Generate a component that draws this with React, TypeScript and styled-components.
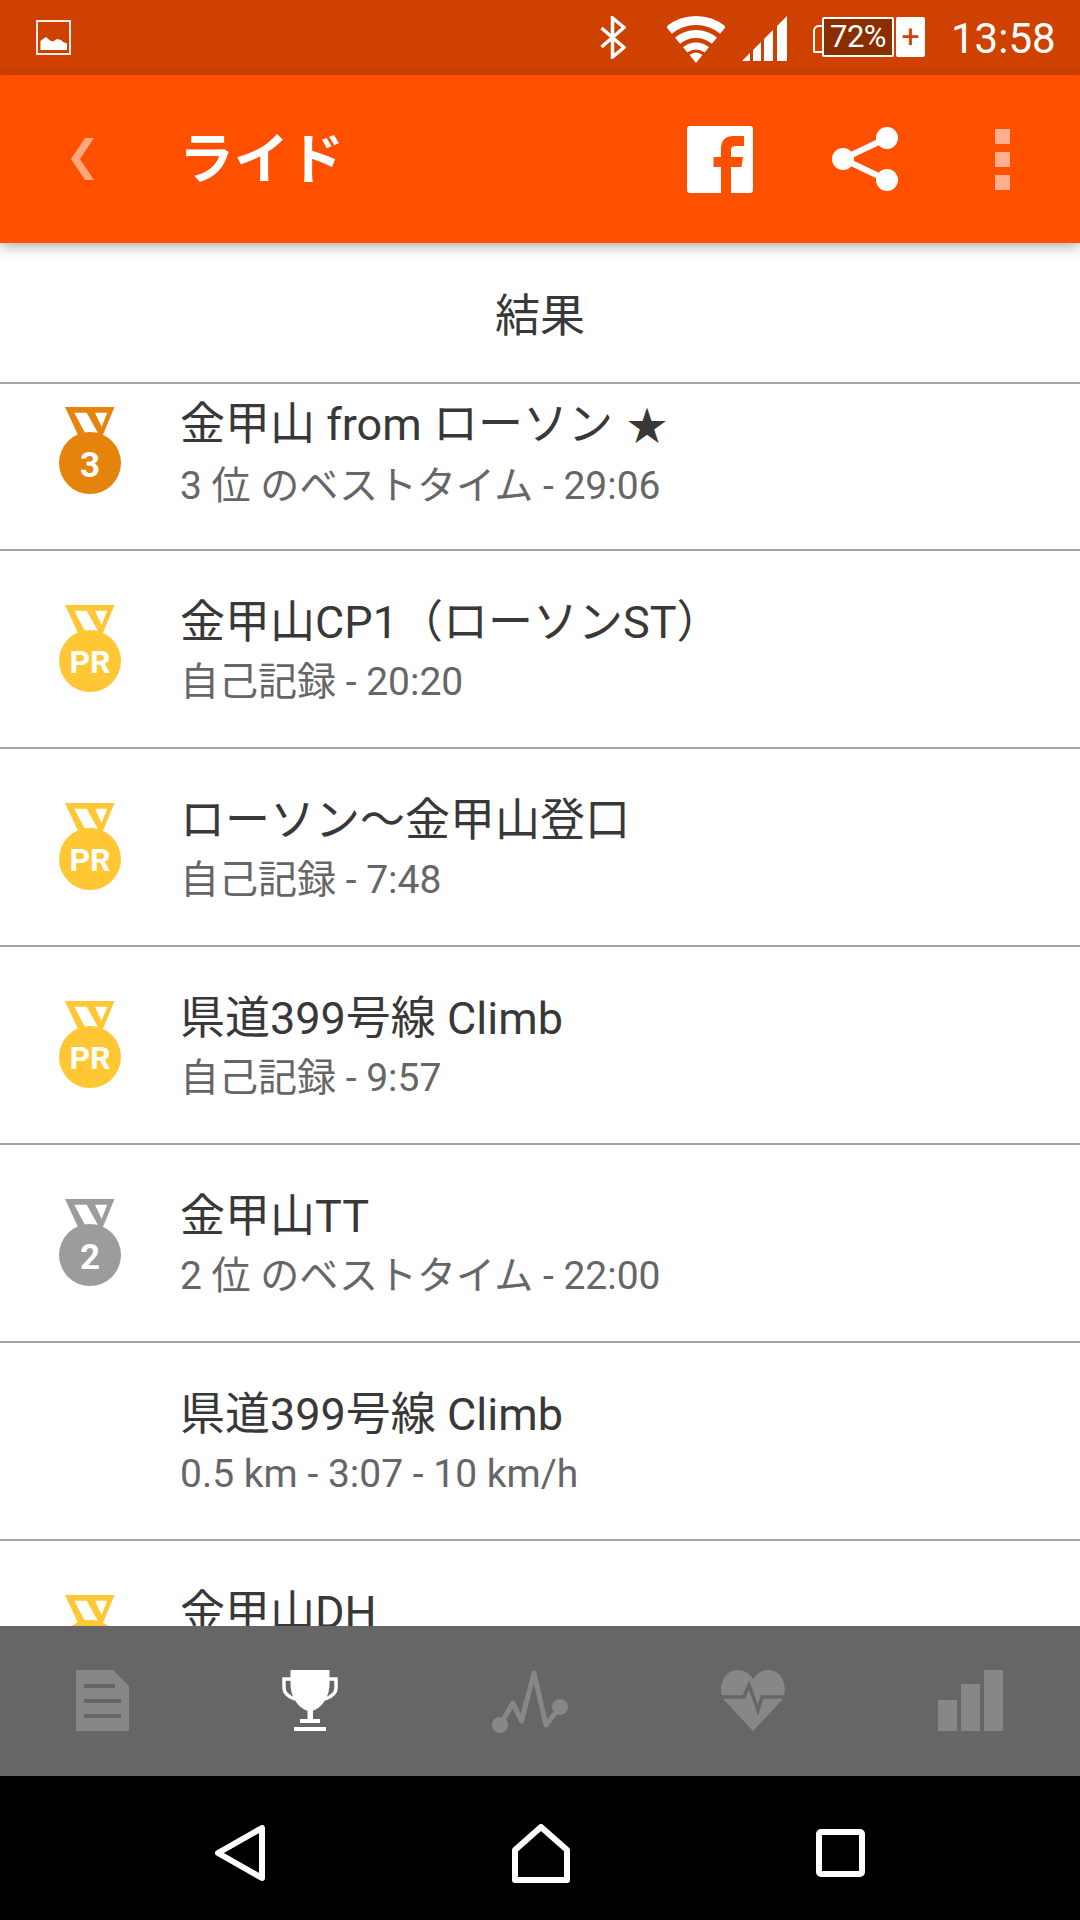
import styled, { createGlobalStyle } from "styled-components";

const GlobalStyle = createGlobalStyle`
  html, body {
    margin: 0;
    padding: 0;
    background: #fff;
  }
  * {
    box-sizing: border-box;
  }
`;

const FONT = `Roboto, "Noto Sans CJK JP", sans-serif`;

const Page = styled.div`
  width: 1080px;
  height: 1920px;
  display: flex;
  flex-direction: column;
  overflow: hidden;
  font-family: ${FONT};
`;

const StatusBar = styled.div`
  height: 75px;
  flex: none;
  background: #ce4100;
  display: flex;
  align-items: flex-start;
  justify-content: space-between;
  padding: 16px 25px 0 36px;
`;

const StatusRight = styled.div`
  display: flex;
  align-items: flex-start;
`;

const GalleryIcon = styled.svg`
  margin-top: 4px;
`;

const WifiIcon = styled.svg`
  margin-left: 41px;
`;

const SignalIcon = styled.svg`
  margin-left: 17px;
`;

const Battery = styled.div`
  position: relative;
  margin: 1px 0 0 35px;
  width: 72px;
  height: 40px;
  background: #8a2e00;
  border: 2px solid #fff;
  border-radius: 2px;
  color: #fff;
  font-size: 31px;
  line-height: 36px;
  text-align: center;
  letter-spacing: -0.5px;

  /* battery nub, its corner cut towards the body */
  &::before {
    content: "";
    position: absolute;
    left: -11px;
    top: 6px;
    width: 9px;
    height: 24px;
    border: 2px solid #fff;
    border-right: none;
    border-radius: 6px 0 0 2px;
  }
`;

const Plug = styled.div`
  margin: 1px 0 0 2px;
  width: 29px;
  height: 40px;
  background: #fff;
  border-radius: 2px;
  color: #ce4100;
  font-size: 32px;
  line-height: 38px;
  text-align: center;
`;

const Clock = styled.div`
  margin-left: 26px;
  width: 104px;
  color: #fff;
  font-size: 42px;
  line-height: 42px;
  margin-top: 2px;
  white-space: nowrap;
`;

const AppBar = styled.div`
  position: relative;
  z-index: 2;
  height: 168px;
  flex: none;
  background: #ff5000;
  box-shadow: 0 4px 12px rgba(0, 0, 0, 0.3);
  display: flex;
  align-items: center;
  padding: 0 70px 0 71px;
`;

const Title = styled.div`
  margin-left: 85px;
  flex: 1;
  color: #fff;
  font-size: 55px;
  font-weight: 700;
  line-height: 64px;
`;

const AppBarActions = styled.div`
  display: flex;
  align-items: center;
  gap: 79px;
`;

const ShareIcon = styled.svg`
  margin-right: 18px;
`;

const MenuDots = styled.div`
  display: flex;
  flex-direction: column;
  gap: 8px;
`;

const MenuDot = styled.span`
  display: block;
  width: 15px;
  height: 15px;
  background: rgba(255, 255, 255, 0.55);
`;

const SectionHeader = styled.div`
  height: 141px;
  flex: none;
  padding-bottom: 1px;
  border-bottom: 2px solid #a3a3a3;
  display: flex;
  align-items: center;
  justify-content: center;
  color: #383838;
  font-size: 45px;
`;

const ResultList = styled.div`
  flex: 1;
  min-height: 0;
  overflow: hidden;
`;

const ResultScroll = styled.div`
  margin-top: -31px;
`;

const Row = styled.div`
  height: 198px;
  border-bottom: 2px solid #a3a3a3;
  display: flex;
  align-items: center;
`;

const MedalSlot = styled.div`
  width: 180px;
  flex: none;
  padding-left: 59px;
  margin-bottom: 1px;
  display: flex;
`;

const RowText = styled.div`
  align-self: flex-start;
  padding-top: 43px;
`;

const RowTitle = styled.div`
  color: #383838;
  font-size: 45px;
  line-height: 58px;
  white-space: nowrap;
`;

const Star = styled.span`
  margin-left: 3px;
  font-size: 40px;
`;

const RowSub = styled.div`
  color: #666;
  font-size: 39px;
  line-height: 60px;
  white-space: nowrap;
`;

const TabBar = styled.div`
  height: 150px;
  flex: none;
  background: #666;
  display: flex;
  align-items: flex-start;
  justify-content: space-between;
  padding: 44px 77px 0 76px;
`;

const NavBar = styled.div`
  height: 144px;
  flex: none;
  background: #000;
  display: flex;
  align-items: center;
  justify-content: space-between;
  padding: 10px 215px 0;
`;

const INACTIVE = "#878787";

const Medal = ({ color, label }: { color: string; label?: string }) => (
  <svg width="62" height="87" viewBox="0 0 62 87">
    <path
      fillRule="evenodd"
      fill={color}
      d="M6 0H55.5L43.5 29H19.5ZM15.3 5.7L26 26H39L27.7 5.7ZM36 5.7L42.6 20L48.3 5.7Z"
    />
    <circle cx="31" cy="56" r="31" fill={color} />
    {label && (
      <text
        x="31"
        y={label === "PR" ? 68 : 69.5}
        fill="#fff"
        fontFamily="Roboto, sans-serif"
        fontSize={label === "PR" ? 32 : 35}
        fontWeight="700"
        textAnchor="middle"
      >
        {label}
      </text>
    )}
  </svg>
);

const wifiArc = (r: number) => {
  const a = (39.5 * Math.PI) / 180;
  const dx = r * Math.sin(a);
  const dy = r * Math.cos(a);
  return `M${29 - dx} ${47 - dy}A${r} ${r} 0 0 1 ${29 + dx} ${47 - dy}`;
};

const signalBars = [
  [0, 8],
  [11, 19],
  [22, 31],
  [35, 45],
];

interface Result {
  title: string;
  starred?: boolean;
  sub?: string;
  medal?: { color: string; label?: string };
}

const BRONZE = "#e5830d";
const GOLD = "#ffc733";
const SILVER = "#9c9c9c";

const results: Result[] = [
  {
    title: "金甲山 from ローソン ",
    starred: true,
    sub: "3 位 のベストタイム - 29:06",
    medal: { color: BRONZE, label: "3" },
  },
  {
    title: "金甲山CP1（ローソンST）",
    sub: "自己記録 - 20:20",
    medal: { color: GOLD, label: "PR" },
  },
  {
    title: "ローソン〜金甲山登口",
    sub: "自己記録 - 7:48",
    medal: { color: GOLD, label: "PR" },
  },
  {
    title: "県道399号線 Climb",
    sub: "自己記録 - 9:57",
    medal: { color: GOLD, label: "PR" },
  },
  {
    title: "金甲山TT",
    sub: "2 位 のベストタイム - 22:00",
    medal: { color: SILVER, label: "2" },
  },
  {
    title: "県道399号線 Climb",
    sub: "0.5 km - 3:07 - 10 km/h",
  },
  {
    // only the top of this row shows above the tab bar
    title: "金甲山DH",
    medal: { color: GOLD },
  },
];

const App = () => {
  return (
    <>
      <GlobalStyle />
      <Page>
        <StatusBar>
          <GalleryIcon width="35" height="35" viewBox="0 0 35 35">
            <rect x="1" y="1" width="33" height="33" fill="none" stroke="#fff" strokeWidth="2" opacity="0.9" />
            <path
              fill="#fff"
              d="M4.5 30V21L7 19L10 17L14 20.5L17 21.5L21 19L25 20L27 22L31 23.5V30Z"
            />
          </GalleryIcon>
          <StatusRight>
            <svg width="26" height="43" viewBox="0 0 26 43">
              <path
                d="M1.5 12L24 31.5L12.5 41V2L24 11.5L1.5 31"
                fill="none"
                stroke="#fff"
                strokeWidth="3.5"
              />
            </svg>
            <WifiIcon width="58" height="47" viewBox="0 0 58 47">
              <path d={wifiArc(42.5)} fill="none" stroke="#fff" strokeWidth="9" />
              <path d={wifiArc(29)} fill="none" stroke="#fff" strokeWidth="8" />
              <path d={wifiArc(17)} fill="none" stroke="#fff" strokeWidth="7" />
              <path d="M29 47L22.5 39Q29 34 35.5 39Z" fill="#fff" />
            </WifiIcon>
            <SignalIcon width="45" height="45" viewBox="0 0 45 45">
              {signalBars.map(([a, b]) => (
                <polygon key={a} fill="#fff" points={`${a},45 ${a},${45 - a} ${b},${45 - b} ${b},45`} />
              ))}
            </SignalIcon>
            <Battery>72%</Battery>
            <Plug>+</Plug>
            <Clock>13:58</Clock>
          </StatusRight>
        </StatusBar>

        <AppBar>
          <svg width="23" height="42" viewBox="0 0 23 42">
            <polygon fill="#fff" opacity="0.5" points="14,0 23,0 9,21 23,42 14,42 0,21" />
          </svg>
          <Title>ライド</Title>
          <AppBarActions>
            <svg width="66" height="67" viewBox="0 0 66 67">
              <rect width="66" height="67" rx="3" fill="#fff" />
              <path
                fill="#ff5000"
                d="M44 67V41H54.5L56 31H44V24Q44 20 49 20H57V10H47Q34 10 34 23V31H26.5V41H34V67Z"
              />
            </svg>
            <ShareIcon width="66" height="64" viewBox="0 0 66 64">
              <path d="M55 11L11 32L55 53" fill="none" stroke="#fff" strokeWidth="6" />
              <circle cx="55" cy="11" r="11" fill="#fff" />
              <circle cx="11" cy="32" r="11" fill="#fff" />
              <circle cx="55" cy="53" r="11" fill="#fff" />
            </ShareIcon>
            <MenuDots>
              <MenuDot />
              <MenuDot />
              <MenuDot />
            </MenuDots>
          </AppBarActions>
        </AppBar>

        <SectionHeader>結果</SectionHeader>

        <ResultList>
          <ResultScroll>
            {results.map((result, index) => (
              <Row key={index}>
                <MedalSlot>
                  {result.medal && <Medal color={result.medal.color} label={result.medal.label} />}
                </MedalSlot>
                <RowText>
                  <RowTitle>
                    {result.title}
                    {result.starred && <Star>★</Star>}
                  </RowTitle>
                  {result.sub && <RowSub>{result.sub}</RowSub>}
                </RowText>
              </Row>
            ))}
          </ResultScroll>
        </ResultList>

        <TabBar>
          <svg width="53" height="61" viewBox="0 0 53 61">
            <path fill={INACTIVE} d="M0 0H37L53 16V61H0Z" />
            <path fill="#666" d="M8 14H39V18H8ZM8 29H45V33H8ZM8 44H45V48H8Z" />
          </svg>
          <svg width="56" height="61" viewBox="0 0 56 61">
            <path fill="#fff" d="M8.5 0H47.5V14C47.5 30 36 41 28 41C20 41 8.5 30 8.5 14Z" />
            <path
              d="M9 9H2V18C2 24 7 27 13 29M47 9H54V18C54 24 49 27 43 29"
              fill="none"
              stroke="#fff"
              strokeWidth="3.5"
            />
            <path fill="#fff" d="M25.5 40H31V49H38V53H18V49H25.5ZM12 57H44V61H12Z" />
          </svg>
          <svg width="76" height="63" viewBox="0 0 76 63">
            <path
              d="M8 55L21 33L29.5 51L42 3L54 55L68 37"
              fill="none"
              stroke={INACTIVE}
              strokeWidth="5"
              strokeLinejoin="round"
              strokeLinecap="round"
            />
            <circle cx="8" cy="55" r="8" fill={INACTIVE} />
            <circle cx="68" cy="37" r="8" fill={INACTIVE} />
          </svg>
          <svg width="64" height="61" viewBox="0 0 64 61">
            <path
              fill={INACTIVE}
              d="M32 61L3 30C-3 22 0 0 17 0C24 0 29 4 32 9C35 4 40 0 47 0C64 0 67 22 61 30Z"
            />
            <path
              d="M0 27H23L28 15L37 40L41 27H64"
              fill="none"
              stroke="#666"
              strokeWidth="3.5"
            />
          </svg>
          <svg width="65" height="61" viewBox="0 0 65 61">
            <path fill={INACTIVE} d="M0 30H19V61H0ZM23 14H42V61H23ZM46 0H65V61H46Z" />
          </svg>
        </TabBar>

        <NavBar>
          <svg width="50" height="56" viewBox="0 0 50 56">
            <path d="M3 28L47 3V53Z" fill="none" stroke="#fff" strokeWidth="6" strokeLinejoin="round" />
          </svg>
          <svg width="58" height="59" viewBox="0 0 58 59">
            <path d="M3 56V26L29 3L55 26V56Z" fill="none" stroke="#fff" strokeWidth="6" strokeLinejoin="round" />
          </svg>
          <svg width="49" height="48" viewBox="0 0 49 48">
            <rect x="3" y="3" width="43" height="42" rx="2" fill="none" stroke="#fff" strokeWidth="6" />
          </svg>
        </NavBar>
      </Page>
    </>
  );
};

export default App;
